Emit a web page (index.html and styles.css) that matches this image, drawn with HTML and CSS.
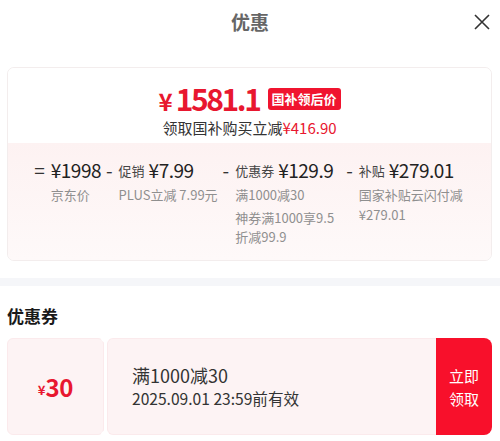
FILE: index.html
```html
<!DOCTYPE html>
<html lang="zh-CN">
<head>
<meta charset="utf-8">
<link rel="stylesheet" href="styles.css">
</head>
<body>
<div class="header">
  <div class="title">优惠</div>
  <div class="close">
    <svg width="16" height="16" viewBox="0 0 16 16"><path d="M1 1 L15 15 M15 1 L1 15" stroke="#333" stroke-width="1.6" fill="none"/></svg>
  </div>
</div>
<div class="wrap">
  <div class="card">
    <div class="card-top">
      <div class="price-line">
        <span class="price"><span class="yen">¥</span>1581.1</span>
        <span class="badge">国补领后价</span>
      </div>
      <div class="save">领取国补购买立减<span class="red">¥416.90</span></div>
    </div>
    <div class="card-bottom">
      <div class="breakdown">
        <div class="item">
          <span class="sign">=</span>
          <div class="body">
            <div class="main"><span class="amt">¥1998</span></div>
            <div class="sub">京东价</div>
          </div>
        </div>
        <div class="item">
          <span class="sign">-</span>
          <div class="body">
            <div class="main"><span class="lbl">促销</span><span class="amt">¥7.99</span></div>
            <div class="sub">PLUS立减 7.99元</div>
          </div>
        </div>
        <div class="item">
          <span class="sign">-</span>
          <div class="body w3">
            <div class="main"><span class="lbl">优惠券</span><span class="amt">¥129.9</span></div>
            <div class="sub">满1000减30</div>
            <div class="sub sub2">神券满1000享9.5折减99.9</div>
          </div>
        </div>
        <div class="item">
          <span class="sign">-</span>
          <div class="body w4">
            <div class="main"><span class="lbl">补贴</span><span class="amt">¥279.01</span></div>
            <div class="sub">国家补贴云闪付减¥279.01</div>
          </div>
        </div>
      </div>
    </div>
  </div>
</div>
<div class="band"></div>
<div class="wrap">
  <div class="section-title">优惠券</div>
  <div class="coupon">
    <div class="c-left"><span class="c-yen">¥</span><span class="c-amt">30</span></div>
    <div class="c-mid">
      <div class="c-name">满1000减30</div>
      <div class="c-date">2025.09.01 23:59前有效</div>
    </div>
    <div class="c-btn">立即<br>领取</div>
  </div>
</div>
</body>
</html>
```
FILE: styles.css
```css
* { box-sizing: border-box; }
body {
  margin: 0;
  background: #fff;
  font-family: "Noto Sans CJK SC", "Noto Sans", sans-serif;
  color: #333;
}
.header {
  position: relative;
  height: 44px;
  display: flex;
  align-items: center;
  justify-content: center;
}
.title {
  font-size: 19px;
  font-weight: 700;
  color: #666;
  line-height: 24px;
}
.close {
  position: absolute;
  right: 10px;
  top: 14px;
  width: 16px;
  height: 16px;
}
.close svg { display: block; }
.wrap { padding: 0 8px 0 7px; }
.card {
  margin-top: 23px;
  border: 1px solid #f3eded;
  border-radius: 7px;
  overflow: hidden;
}
.card-top {
  padding: 13px 0 4px;
  text-align: center;
  background: #fff;
}
.price-line {
  display: flex;
  align-items: center;
  justify-content: center;
  height: 36px;
}
.price {
  color: #e8172f;
  font-size: 30px;
  font-weight: 700;
  line-height: 34px;
  letter-spacing: -2.4px;
}
.price .yen { font-size: 24px; margin-right: 3px; letter-spacing: 0; }
.badge {
  margin-left: 8px;
  background: #f0142f;
  color: #fff;
  font-size: 13px;
  font-weight: 700;
  line-height: 22px;
  height: 22px;
  padding: 0 4px;
  border-radius: 3px;
}
.save {
  font-size: 15px;
  line-height: 22px;
  color: #333;
}
.red { color: #e8172f; }
.card-bottom {
  background: linear-gradient(180deg, #fdf2f2 0%, #fef9f9 100%);
  padding: 15px 0 14px;
}
.breakdown {
  display: flex;
  justify-content: center;
  align-items: flex-start;
  gap: 5px;
}
.item { display: flex; align-items: flex-start; }
.sign {
  font-size: 19px;
  line-height: 24px;
  color: #333;
  margin-right: 6px;
}
.main {
  display: flex;
  align-items: center;
  height: 24px;
  white-space: nowrap;
}
.lbl {
  font-size: 13px;
  color: #444;
  margin-right: 4px;
}
.amt {
  font-size: 19px;
  color: #222;
  line-height: 24px;
  letter-spacing: -0.5px;
}
.sub {
  margin-top: 3px;
  font-size: 13px;
  line-height: 20px;
  color: #8f8f8f;
}
.sub2 { margin-top: 3px; line-height: 19px; }
.w3 { width: 106px; }
.w4 { width: 106px; }
.band {
  margin-top: 17px;
  height: 8px;
  background: #f5f6f9;
}
.section-title {
  margin-top: 18px;
  font-size: 17px;
  font-weight: 700;
  color: #1a1a1a;
  line-height: 24px;
}
.coupon {
  margin-top: 10px;
  display: flex;
  height: 97px;
}
.c-left {
  position: relative;
  width: 97px;
  background: #fdf3f4;
  border: 1px solid #fbeaec;
  border-radius: 6px;
  display: flex;
  align-items: center;
  justify-content: center;
  color: #e8172f;
  font-weight: 700;
}
.c-yen { font-size: 13px; margin-top: 6px; }
.c-amt { font-size: 24px; line-height: 30px; letter-spacing: -0.3px; }
.c-mid {
  position: relative;
  margin-left: 3px;
  flex: 1;
  background: #fdf3f4;
  border: 1px solid #fbeaec;
  border-right: none;
  border-radius: 6px 0 0 6px;
  padding: 24px 0 0 24px;
}
.c-mid::before, .c-mid::after {
  content: "";
  position: absolute;
  left: -7px;
  width: 8px;
  height: 8px;
  border-radius: 50%;
  background: #fff;
}
.c-mid::before { top: -5px; }
.c-mid::after { bottom: -5px; }
.c-name {
  font-size: 18px;
  line-height: 24px;
  color: #333;
}
.c-date {
  font-size: 15.6px;
  line-height: 23px;
  color: #333;
}
.c-btn {
  width: 56px;
  background: #f8102b;
  color: #fff;
  font-size: 15px;
  line-height: 23px;
  display: flex;
  align-items: center;
  justify-content: center;
  text-align: center;
  border-radius: 0 8px 8px 0;
}
```
